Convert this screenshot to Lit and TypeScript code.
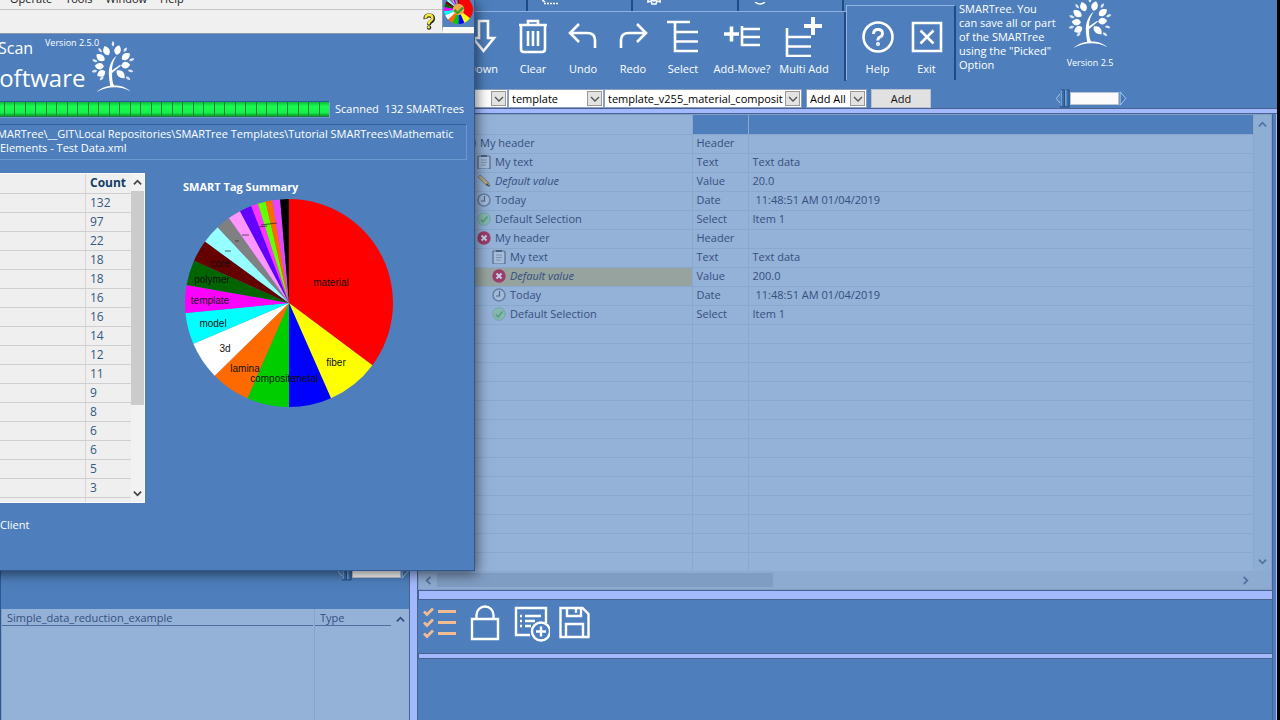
import { LitElement, html, css, svg, nothing } from "lit";
import { customElement } from "lit/decorators.js";
import { classMap } from "lit/directives/class-map.js";

const leaf = (angle: number, dist: number, len: number, wid: number, op = 1) => svg`
  <path transform="rotate(${angle} 23 27) translate(23 ${27 - dist})" opacity=${op}
    d="M0 ${-len / 2}C${wid} ${-len / 6} ${wid * 0.8} ${len / 3} 0 ${len / 2}C${-wid} ${len / 4} ${-wid} ${-len / 6} 0 ${-len / 2}Z"/>`;

const treeLogo = html`<svg class="logo" viewBox="0 0 46 56" width="42" height="51" fill="#fff" aria-hidden="true">
  <path d="M20 49C19 40 17 33 20 25C22 20 24 17 27 15C23 21 22 26 22 31L31 25L31.500 26L22 34C22 40 22 44 25 49Z"/>
  <path d="M5 55C12 47 32 44 42 54C32 48 16 48 5 55Z"/>
  ${leaf(-22, 19, 11, 5)}${leaf(16, 19, 11, 5)}${leaf(52, 18, 11, 5)}${leaf(-54, 17, 11, 5)}
  ${leaf(84, 14, 10, 5)}${leaf(-88, 15, 10, 5)}${leaf(135, 12, 12, 5)}${leaf(-120, 15, 10, 5)}
  ${leaf(0, 25, 6, 2, 0.85)}${leaf(-38, 23, 6, 2, 0.8)}${leaf(36, 23, 6, 2, 0.8)}${leaf(70, 22, 6, 2, 0.8)}
  ${leaf(-72, 21, 6, 2, 0.8)}${leaf(104, 20, 6, 2, 0.8)}${leaf(-104, 21, 6, 2, 0.8)}${leaf(128, 21, 6, 2, 0.8)}${leaf(-136, 18, 6, 2, 0.8)}
</svg>`;

const glyphs: Record<string, unknown> = {
  Down: svg`<path d="M15 4h9v17h6L19.500 34 9 21h6z"/>`,
  Clear: svg`<path d="M5 8h28M14 8V4h10v4M7 9v23q0 3 3 3h18q3 0 3-3V9M14 14v15M19 14v15M24 14v15"/>`,
  Undo: svg`<path d="M15 7L6 16l9 9M6 16h17q8 0 8 7v8"/>`,
  Redo: svg`<path d="M23 7l9 9-9 9M32 16H15q-8 0-8 7v8"/>`,
  Select: svg`<path d="M3 5h23M11 5v29h23M11 15h23M11 24.500h23"/>`,
  "Add-Move?": svg`<path stroke-width="3.600" d="M1 17h15M8.500 9.500v15"/><path d="M19 9v19h18M20 12h17M20 20h17"/>`,
  "Multi Add": svg`<path stroke-width="4" d="M19 9h18M28 0v18"/><path d="M2 11v28h24M3 20h23M3 29.500h23"/>`,
  Help: svg`<circle cx="19" cy="20" r="14.500"/><path d="M14.500 17q0-4.500 4.500-4.500t4.500 4q0 2.500-2.500 3.500t-2 3.500" stroke-width="2.800"/><circle cx="19" cy="27" r=".7"/>`,
  Exit: svg`<path d="M5 6h28v28H5z M12.500 13.500l13 13M25.500 13.500l-13 13"/>`,
};

const tool = (name: string) => html`<button class="tool" type="button">
  <svg width="38" height="40" viewBox="0 0 38 40" fill="none" stroke="#fff" stroke-width="2.600">${glyphs[name]}</svg>
  <span>${name}</span></button>`;

const chevron = (dir: "up" | "down" | "left" | "right") => {
  const d = { up: "M1 7l4-4 4 4", down: "M1 3l4 4 4-4", left: "M7 1L3 5l4 4", right: "M3 1l4 4-4 4" }[dir];
  return html`<svg width="9" height="9" viewBox="0 0 10 10" fill="none" stroke="currentColor" stroke-width="2" aria-hidden="true"><path d=${d}/></svg>`;
};

const combo = (value: string, label: string, cls: string) => html`<label class="combo ${cls}">
  <select aria-label=${label}><option>${value}</option></select>
  <span class="drop"><svg width="10" height="8" viewBox="0 0 10 8" fill="none" stroke="#555" stroke-width="1.300"><path d="M1 2l4 4 4-4"/></svg></span></label>`;

const slider = html`<span class="slider">
  <svg width="15" height="19" viewBox="0 0 15 20" aria-hidden="true"><path d="M5 5L1 10l4 5" fill="none" stroke="#a9c8ee"/><path d="M5.500 1h4v18h-4zM10.500 1h4v18h-4z" fill="#386fae" stroke="#244f86"/><path d="M6 1v17M11 1v17" stroke="#a9c8ee"/></svg>
  <span class="track"></span>
  <svg width="8" height="19" viewBox="0 0 8 20" aria-hidden="true"><path d="M1 3l6 7-6 7z" fill="#4679b5" stroke="#a9c8ee"/></svg></span>`;

const nodeIcons: Record<string, unknown> = {
  root: svg`<circle cx="7" cy="7" r="7" fill="#5b6f92"/>`,
  text: svg`<rect x="1" y="1" width="12" height="13" rx="1" fill="#a5bddb" stroke="#566a87" stroke-width="1.200"/><path d="M4 1h6" stroke="#4b5f7f" stroke-width="2"/><path d="M4 5h6M4 7.500h6M4 10h5" stroke="#7b90b0"/>`,
  edit: svg`<path d="M1 3l2-2 8 7 2 4-4-1z" fill="#b3a878" stroke="#6b7177" stroke-width=".8"/><path d="M10 9l3 4-4-2z" fill="#3b4b66"/>`,
  clock: svg`<circle cx="7" cy="7" r="6" fill="#a3bad9" stroke="#6780a5" stroke-width="1.600"/><path d="M7.500 3v5H4" fill="none" stroke="#4d658a" stroke-width="1.200"/>`,
  check: svg`<circle cx="7" cy="7" r="6.300" fill="#84b8ad" stroke="#74a5b0"/><path d="M4 7.500l2 2.500 4.500-5.500" fill="none" stroke="#559a84" stroke-width="1.500"/>`,
  error: svg`<circle cx="7" cy="7" r="6.700" fill="#9b3d6b"/><path d="M4.500 4.500l5 5M9.500 4.500l-5 5" stroke="#c5d3ea" stroke-width="1.800"/>`,
};

interface Node { depth: number; icon: string; name: string; type: string; data: string; value?: boolean; marked?: boolean; date?: boolean }
const nodes: Node[] = [
  { depth: 0, icon: "root", name: "My header", type: "Header", data: "" },
  { depth: 1, icon: "text", name: "My text", type: "Text", data: "Text data" },
  { depth: 1, icon: "edit", name: "Default value", type: "Value", data: "20.0", value: true },
  { depth: 1, icon: "clock", name: "Today", type: "Date", data: "11:48:51 AM 01/04/2019", date: true },
  { depth: 1, icon: "check", name: "Default Selection", type: "Select", data: "Item 1" },
  { depth: 1, icon: "error", name: "My header", type: "Header", data: "" },
  { depth: 2, icon: "text", name: "My text", type: "Text", data: "Text data" },
  { depth: 2, icon: "error", name: "Default value", type: "Value", data: "200.0", value: true, marked: true },
  { depth: 2, icon: "clock", name: "Today", type: "Date", data: "11:48:51 AM 01/04/2019", date: true },
  { depth: 2, icon: "check", name: "Default Selection", type: "Select", data: "Item 1" },
];

const counts = [132, 97, 22, 18, 18, 16, 16, 14, 12, 11, 9, 8, 6, 6, 5, 3];

/* end angle in degrees, clockwise from twelve o'clock */
const slices: [number, string][] = [
  [126.7, "#f00"], [156.2, "#ff0"], [180, "#00f"], [203.6, "#00cd00"], [225.6, "#ff6a00"], [246.9, "#fff"],
  [264.5, "#0ff"], [280, "#f0f"], [294, "#006400"], [306.2, "#640000"], [316.7, "#96ffff"], [324.7, "#808080"],
  [331.9, "#ff96ff"], [338.7, "#6400ff"], [342.6, "#ff32ff"], [347, "#64ff00"], [350.8, "#ff6a00"], [355.1, "#e646ff"], [360, "#000"],
];
const pieTags: [number, number, string][] = [
  [148, 88, "material"], [153, 168, "fiber"], [90, 184, "composite"], [123, 184, "metal"], [62, 174, "lamina"],
  [42, 154, "3d"], [30, 129, "model"], [27, 106, "template"], [29, 85, "polymer"], [37, 69, "core"],
];

const pie = (cx: number, cy: number, r: number) => {
  let from = 0;
  return slices.map(([to, fill]) => {
    const at = (a: number) => `${cx + r * Math.sin((a * Math.PI) / 180)} ${cy - r * Math.cos((a * Math.PI) / 180)}`;
    const d = `M${cx} ${cy}L${at(from)}A${r} ${r} 0 0 1 ${at(to)}Z`;
    from = to;
    return svg`<path d=${d} fill=${fill}/>`;
  });
};

const base = css`
  * { box-sizing: border-box; }
  button, select, input { font: inherit; }
  svg { display: block; flex: none; }
  .logo { overflow: visible; }
`;

@customElement("scan-window")
export class ScanWindow extends LitElement {
  static styles = [base, css`
    :host { display: flex; flex-direction: column; overflow: hidden; color: #fff; background: #4e7fbc; border: 1px solid #2f588f; border-top: 0; border-left: 0; }
    .chrome { display: flex; height: 34px; color: #222; background: #f0f0f0; border-bottom: 1px solid #8d97a8; flex: none; }
    .bars { flex: 1; }
    .menu { display: flex; align-items: flex-end; gap: 13px; height: 10px; padding: 0 0 2px 26px; border-bottom: 1px solid #c4c4c4; line-height: 16px; }
    .hint { display: flex; justify-content: flex-end; padding: 3px 6px; }
    .badge { width: 32px; background: #5482bd; border-left: 1px solid #8d97a8; border-bottom: 6px solid #f8f8f8; overflow: hidden; display: flex; align-items: flex-end; }
    .head { display: flex; align-items: flex-start; padding-top: 2px; height: 66px; flex: none; }
    .names { width: 108px; display: grid; grid-template-columns: 61px 47px; align-items: start; }
    .scan { font-size: 16px; line-height: 24px; padding-left: 14px; }
    .version { font-size: 9px; line-height: 14px; white-space: nowrap; }
    .big { grid-column: 1 / 3; font-size: 24px; line-height: 35px; padding-left: 2px; }
    .head .logo { margin-top: 6px; }
    .progress { display: flex; align-items: center; gap: 5px; flex: none; height: 18px; }
    .bar { display: flex; gap: 1px; width: 346px; height: 17px; padding-bottom: 1px; border: 1px solid #2a599a; border-left: 0; border-right-color: #7ba1d6; border-bottom-color: #6d98d0; background: #1b8040; }
    .seg { flex: 1; background: linear-gradient(#10b93c, #19fa50 30%, #17f04c 75%, #0a9a2c); }
    .path { margin: 6px 7px 0 0; height: 36px; padding: 2px 8px 0 16px; line-height: 14px; border: 1px solid #2f609f; border-left: 0; border-right-color: #6d98d0; border-bottom-color: #6d98d0; text-indent: -9px; flex: none; }
    .path span { display: block; white-space: nowrap; }
    .path .rest { text-indent: 0; }
    .main { display: flex; align-items: flex-start; gap: 38px; margin-top: 13px; }
    .counts { display: flex; width: 161px; height: 330px; overflow: hidden; color: #335a80; background: #efefef; border: 1px solid #fafafa; }
    table { border-collapse: collapse; flex: 1; table-layout: fixed; }
    td, th { height: 19px; padding: 0 0 1px 4px; text-align: left; font-size: 12px; line-height: 17px; border-bottom: 1px solid #cfcfd2; border-left: 1px solid #ddd5d5; }
    th { color: #143c66; }
    .tag { width: 100px; }
    .scroll { width: 13px; display: flex; flex-direction: column; align-items: center; color: #444; background: #f2f2f2; padding: 4px 0; gap: 4px; }
    .thumb { width: 100%; height: 214px; background: #cbcbcb; margin-bottom: auto; }
    h2 { margin: 6px 0 4px; font-size: 11px; line-height: 15px; }
    .pie { overflow: visible; }
    .pie text { font: 10px "Liberation Sans", sans-serif; fill: #111; text-anchor: middle; }
    .client { margin: 14px 0 0 16px; line-height: 16px; }
  `];

  render() {
    return html`
      <div class="chrome">
        <div class="bars">
          <div class="menu"><span>Operate</span><span>Tools</span><span>Window</span><span>Help</span></div>
          <div class="hint"><svg width="13" height="17" viewBox="0 0 13 17" aria-hidden="true"><path d="M2.500 6Q2 2.500 6 2.500T10 5.500Q10 7.500 8 8.500T6 12" fill="none" stroke="#222" stroke-width="4"/><circle cx="6" cy="14.500" r="2.200" fill="#222"/><path d="M2.500 5.500Q2.500 2 6 2T9.500 5.200Q9.500 7 7.500 8T5.700 11.500" fill="none" stroke="#f4ea3a" stroke-width="2.300"/><circle cx="5.700" cy="14.200" r="1.300" fill="#f4ea3a"/></svg></div>
        </div>
        <div class="badge"><svg width="31" height="32" viewBox="0 0 216 216">${pie(108, 98, 100)}<circle cx="108" cy="98" r="40" fill="#efa94d"/><path d="M80 100l20 22 40-38" fill="none" stroke="#3a9c2c" stroke-width="16"/></svg></div>
      </div>
      <div class="head">
        <div class="names"><span class="scan">Scan</span><span class="version">Version 2.5.0</span><span class="big">Software</span></div>
        ${treeLogo}
      </div>
      <div class="progress">
        <div class="bar" role="progressbar" aria-label="Scan progress">${Array.from({ length: 33 }, () => html`<i class="seg"></i>`)}</div>
        <span>Scanned&nbsp; 132 SMARTrees</span>
      </div>
      <div class="path"><span>SMARTree\\__GIT\\Local Repositories\\SMARTree Templates\\Tutorial SMARTrees\\Mathematic</span><span class="rest">Elements - Test Data.xml</span></div>
      <div class="main">
        <div class="counts">
          <table>
            <thead><tr><th class="tag"></th><th>Count</th></tr></thead>
            <tbody>${counts.map((c) => html`<tr><td></td><td>${c}</td></tr>`)}<tr><td></td><td></td></tr></tbody>
          </table>
          <div class="scroll">${chevron("up")}<div class="thumb"></div>${chevron("down")}</div>
        </div>
        <div class="chart">
          <h2>SMART Tag Summary</h2>
          <svg class="pie" width="212" height="212" viewBox="0 0 212 212">
            ${pie(106, 105, 104)}
            <path d="M42 53h6M52 43h4M59 37h7M76 29l8-1M78 27l16-2" stroke="#222" stroke-width=".7"/>
            ${pieTags.map(([x, y, t]) => svg`<text x=${x} y=${y}>${t}</text>`)}
          </svg>
        </div>
      </div>
      <div class="client">Client</div>`;
  }
}

@customElement("tree-grid")
export class TreeGrid extends LitElement {
  static styles = [base, css`
    :host { display: flex; flex-direction: column; min-height: 0; color: #34507f; background: #94b1d7; border: 1px solid #7f9fc9; }
    .view { display: flex; flex: 1; min-height: 0; overflow: hidden; }
    table { flex: 1; border-collapse: collapse; table-layout: fixed; width: 100%; height: max-content; }
    td { height: 19px; padding: 0 0 2px 4px; line-height: 16px; border-bottom: 1px solid #8aa7cd; border-right: 1px solid #8aa7cd; white-space: nowrap; }
    .name { width: 273px; }
    .type { width: 56px; }
    .picked { background: #4e7fbc; }
    .marked { background: #96a39f; }
    .item { display: flex; align-items: center; gap: 4px; height: 16px; }
    .d0 { padding-left: 39px; } .d1 { padding-left: 54px; } .d2 { padding-left: 69px; }
    .value { font-style: italic; }
    .date { padding-left: 7px; }
    .vbar { width: 17px; display: flex; flex-direction: column; justify-content: space-between; align-items: center; padding: 5px 0; color: #55719f; background: #8faed4; }
    .hbar { display: flex; align-items: center; height: 18px; padding: 0 21px 0 5px; gap: 4px; color: #55719f; background: #8daad0; flex: none; }
    .thumb { width: 336px; height: 14px; background: #7f9cc2; margin-right: auto; }
  `];

  render() {
    return html`
      <div class="view">
        <table>
          <tr><td class="name"></td><td class="type picked"></td><td class="picked"></td></tr>
          ${nodes.map((n) => html`<tr>
            <td class=${classMap({ marked: !!n.marked })}><div class=${classMap({ item: true, value: !!n.value, [`d${n.depth}`]: true })}>
              <svg width="14" height="14" viewBox="0 0 14 14" aria-hidden="true">${nodeIcons[n.icon]}</svg><span>${n.name}</span></div></td>
            <td>${n.type}</td><td class=${n.date ? "date" : nothing}>${n.data}</td></tr>`)}
          ${Array.from({ length: 30 }, () => html`<tr><td></td><td></td><td></td></tr>`)}
        </table>
        <div class="vbar">${chevron("up")}${chevron("down")}</div>
      </div>
      <div class="hbar">${chevron("left")}<div class="thumb"></div>${chevron("right")}</div>`;
  }
}

@customElement("app-root")
export class AppRoot extends LitElement {
  static styles = [base, css`
    :host { display: flex; flex-direction: column; position: relative; height: 100vh; overflow: hidden; padding-right: 3px; font: 11px/16px "Open Sans", "Noto Sans", sans-serif; color: #fff; background: #000; }
    .ribbon { height: 84px; flex: none; display: flex; padding-left: 457px; background: #4e7fbc; }
    .edit { width: 389px; }
    .tabs { display: grid; grid-template-columns: 71px 105px 106px 105px; height: 12px; border-bottom: 1px solid #8fb2e0; }
    .tab { border-right: 2px solid #1f4c86; padding: 0 0 6px 14px; overflow: hidden; display: flex; align-items: flex-end; }
    .tools { display: flex; height: 69px; padding: 5px 0 0 1px; border-right: 2px solid #1f4c86; }
    .tool { width: 50px; flex: none; padding: 0; border: 0; background: none; color: inherit; display: flex; flex-direction: column; align-items: center; gap: 4px; white-space: nowrap; cursor: pointer; }
    .tool:nth-child(6) { width: 68px; }
    .tool:nth-child(7) { width: 56px; }
    .help { width: 110px; height: 75px; margin-top: 5px; padding: 11px 3px 0 6px; display: flex; border: 1px solid #8fb2e0; border-width: 1px 0 0 1px; border-right: 2px solid #1f4c86; }
    .help .tool { width: 49px; }
    .note { width: 105px; margin: 0; padding: 2px 0 0 3px; line-height: 14px; white-space: nowrap; }
    .brand { width: 58px; display: flex; flex-direction: column; align-items: center; justify-content: flex-end; gap: 6px; height: 71px; font-size: 9px; white-space: nowrap; }
    .fields { display: flex; align-items: flex-start; height: 24px; padding: 5px 0 0 440px; flex: none; background: #4e7fbc; }
    .combo { position: relative; display: block; height: 19px; color: #111; }
    .combo select { display: block; appearance: none; width: 100%; height: 19px; border: 1px solid #8a9fbd; border-radius: 0; background: #fff; padding: 0 16px 0 3px; line-height: 17px; }
    .drop { position: absolute; right: 2px; top: 2px; width: 15px; height: 15px; display: grid; place-items: center; background: #e3e3e3; border: 1px solid #999; pointer-events: none; }
    .w-a { width: 68px; } .w-b { width: 96px; } .w-c { width: 198px; } .w-d { width: 61px; margin: 0 4px; }
    .add { width: 60px; height: 19px; padding: 0; border: 1px solid #b9c2d0; background: #e1e1e1; color: #111; margin-right: 124px; }
    .slider { display: flex; align-items: center; flex: none; }
    .track { width: 49px; height: 13px; background: #fbfbfb; border: 1px solid #b9c2d0; }
    .rule { flex: none; height: 6px; background: #a3b9fd; border: 1px solid #4b618f; border-right: 0; }
    .thick { height: 10px; }
    .body { flex: 1; min-height: 0; display: flex; background: #4e7fbc; border-right: 1px solid #a3b9fd; }
    .left { width: 409px; flex: none; display: flex; flex-direction: column; border-left: 1px solid #2f588f; }
    .upper { flex: 1; display: flex; align-items: flex-end; justify-content: flex-end; padding-bottom: 28px; }
    .listing { height: 111px; display: flex; color: #34507f; background: #94b1d7; border-left: 1px solid #7f9fc9; }
    .col { border-right: 1px solid #87a4cb; padding: 0 1px 0 0; }
    .col span { display: block; height: 17px; padding-left: 5px; line-height: 18px; border-bottom: 1px solid #4f6ea0; }
    .grow { flex: 1; }
    .kind { width: 77px; border-right: 0; }
    .lbar { width: 17px; padding-top: 6px; display: flex; justify-content: center; }
    .split { width: 9px; flex: none; background: #a3b9fd; border-right: 1px solid #4b618f; border-left: 1px solid #4b618f; }
    .right { flex: 1; min-width: 0; display: flex; flex-direction: column; border-right: 1px solid #4b618f; margin-right: 3px; }
    .grid { flex: 1; }
    .actions { display: flex; align-items: flex-start; gap: 9px; height: 53px; padding: 3px 4px; flex: none; }
    .actions button { padding: 0; border: 0; background: none; cursor: pointer; }
    .foot { height: 61px; flex: none; }
    .scan-window { position: absolute; left: -16px; top: 0; width: 491px; height: 571px; box-shadow: 2px 3px 12px rgba(0, 0, 0, 0.55); }
  `];

  render() {
    return html`
      <header class="ribbon">
        <div class="edit">
          <div class="tabs">
            <span class="tab"></span>
            <span class="tab"><svg width="16" height="5" viewBox="0 0 16 5" fill="none" stroke="#fff" stroke-width="1.500"><path d="M0 0l3 2" /><path d="M2 3.500h14" stroke-dasharray="2 1"/></svg></span>
            <span class="tab"><svg width="14" height="5" viewBox="0 0 14 5" fill="none" stroke="#fff" stroke-width="1.600"><path d="M1 0v2l3-1 1 3h4l1-3 3 1V0M5 0q2 2 4 0"/></svg></span>
            <span class="tab"><svg width="14" height="3" viewBox="0 0 14 3" fill="none" stroke="#fff" stroke-width="1.500"><path d="M2 0q5 4 10 0"/></svg></span>
          </div>
          <div class="tools">${["Down", "Clear", "Undo", "Redo", "Select", "Add-Move?", "Multi Add"].map(tool)}</div>
        </div>
        <div class="help">${tool("Help")}${tool("Exit")}</div>
        <p class="note">SMARTree. You<br>can save all or part<br>of the SMARTree<br>using the "Picked"<br>Option</p>
        <div class="brand">${treeLogo}<span>Version 2.5</span></div>
      </header>
      <div class="fields">
        ${combo("", "Group", "w-a")}${combo("template", "Kind", "w-b")}${combo("template_v255_material_composit", "Template", "w-c")}${combo("Add All", "Add mode", "w-d")}
        <button class="add" type="button">Add</button>
        ${slider}
      </div>
      <div class="rule"></div>
      <div class="body">
        <section class="left">
          <div class="upper">${slider}</div>
          <div class="listing">
            <div class="col grow"><span>Simple_data_reduction_example</span></div>
            <div class="col kind"><span>Type</span></div>
            <div class="lbar">${chevron("up")}</div>
          </div>
        </section>
        <div class="split"></div>
        <section class="right">
          <tree-grid class="grid"></tree-grid>
          <div class="rule thick"></div>
          <div class="actions">
            <button type="button" aria-label="Check list"><svg width="36" height="40" viewBox="0 0 36 40" fill="none" stroke="#f0bd93" stroke-width="2.800"><path d="M2 8.500l3 3 6-6M2 19.500l3 3 6-6M2 30.500l3 3 6-6M16 8.500h18M16 19.500h18M16 30.500h18"/></svg></button>
            <button type="button" aria-label="Lock"><svg width="36" height="40" viewBox="0 0 36 40" fill="none" stroke="#fff" stroke-width="2.400"><path d="M5 16h26v20H5zM9.500 16v-4a8.500 8.500 0 0 1 17 0v4"/></svg></button>
            <button type="button" aria-label="Add to list"><svg width="38" height="40" viewBox="0 0 38 40" fill="none" stroke="#fff" stroke-width="2.400"><path d="M18 32H4V5h30v15M8 13h2M13 13h16M8 18h2M13 18h10M8 23h2M13 23h6"/><circle cx="29" cy="28.500" r="9"/><path d="M24 28.500h10M29 23.500v10"/></svg></button>
            <button type="button" aria-label="Save"><svg width="32" height="40" viewBox="0 0 32 40" fill="none" stroke="#fff" stroke-width="2.400"><path d="M1.500 5h22l6 6v23h-28zM8 5v8h14V5M17 5v5M7 34V21h17v13"/></svg></button>
          </div>
          <div class="rule"></div>
          <div class="foot"></div>
        </section>
      </div>
      <scan-window class="scan-window"></scan-window>`;
  }
}
